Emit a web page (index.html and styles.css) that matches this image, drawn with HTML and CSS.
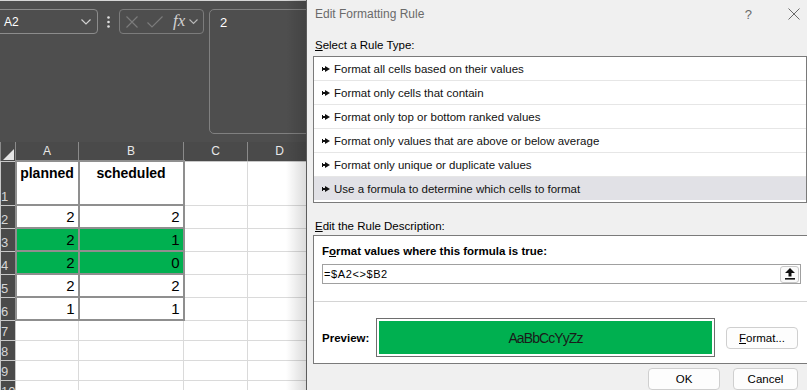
FILE: index.html
```html
<!DOCTYPE html>
<html lang="en">
<head>
  <meta charset="UTF-8" />
  <title>Edit Formatting Rule</title>
  <link rel="stylesheet" href="styles.css">
</head>
<body>

  <div class="app">

    <div class="excel">
      <div class="formula-area">
        <div class="namebox">
          <span>A2</span>
          <svg width="10" height="6" viewBox="0 0 10 6"><path d="M0.5 0.5 L5 5 L9.5 0.5" fill="none" stroke="#d0d0d0" stroke-width="1.2"/></svg>
        </div>
        <div class="dots">
          <svg width="3" height="12" viewBox="0 0 3 12"><circle cx="1.5" cy="1.5" r="1.3" fill="#e0e0e0"/><circle cx="1.5" cy="6" r="1.3" fill="#e0e0e0"/><circle cx="1.5" cy="10.5" r="1.3" fill="#e0e0e0"/></svg>
        </div>
        <div class="fxbox">
          <svg class="ico-x" width="12" height="12" viewBox="0 0 12 12"><path d="M0.5 0.5 L11.5 11.5 M11.5 0.5 L0.5 11.5" stroke="#7c7c7c" stroke-width="1.1"/></svg>
          <svg class="ico-ok" width="16" height="12" viewBox="0 0 16 12"><path d="M0.5 6.5 L5 11 L15.5 0.5" fill="none" stroke="#7c7c7c" stroke-width="1.1"/></svg>
          <span class="fx">fx</span>
          <svg width="9" height="6" viewBox="0 0 9 6"><path d="M0.5 0.5 L4.5 4.5 L8.5 0.5" fill="none" stroke="#b8b8b8" stroke-width="1.1"/></svg>
        </div>
        <div class="formula-bar">2</div>
      </div>

      <table class="sheet">
        <colgroup>
          <col class="c-rh"><col class="c-a"><col class="c-b"><col class="c-c"><col class="c-d">
        </colgroup>
        <tr class="hdr">
          <th class="corner"><svg width="11" height="11" viewBox="0 0 11 11"><polygon points="11,0 11,11 0,11" fill="#e6e6e6"/></svg></th>
          <th>A</th><th>B</th><th>C</th><th>D</th>
        </tr>
        <tr class="r1">
          <td class="rh">1</td>
          <td class="b head">planned</td>
          <td class="b head">scheduled</td>
          <td></td><td></td>
        </tr>
        <tr class="rd">
          <td class="rh">2</td><td class="b num">2</td><td class="b num">2</td><td></td><td></td>
        </tr>
        <tr class="rd">
          <td class="rh">3</td><td class="b num g">2</td><td class="b num g">1</td><td></td><td></td>
        </tr>
        <tr class="rd">
          <td class="rh">4</td><td class="b num g">2</td><td class="b num g">0</td><td></td><td></td>
        </tr>
        <tr class="rd">
          <td class="rh">5</td><td class="b num">2</td><td class="b num">2</td><td></td><td></td>
        </tr>
        <tr class="rd">
          <td class="rh">6</td><td class="b num">1</td><td class="b num">1</td><td></td><td></td>
        </tr>
        <tr class="re"><td class="rh">7</td><td></td><td></td><td></td><td></td></tr>
        <tr class="re"><td class="rh">8</td><td></td><td></td><td></td><td></td></tr>
        <tr class="re"><td class="rh">9</td><td></td><td></td><td></td><td></td></tr>
        <tr class="re"><td class="rh">10</td><td></td><td></td><td></td><td></td></tr>
      </table>

      <div class="shade"></div>
    </div>

    <div class="dialog">
      <div class="titlebar">
        <span class="title">Edit Formatting Rule</span>
        <span class="help">?</span>
        <svg class="close" width="12" height="12" viewBox="0 0 12 12"><path d="M0.5 0.5 L11.5 11.5 M11.5 0.5 L0.5 11.5" stroke="#6a6a6a" stroke-width="1"/></svg>
      </div>

      <div class="label"><u>S</u>elect a Rule Type:</div>
      <ul class="rule-list">
        <li><svg class="arrow" width="8" height="6" viewBox="0 0 8 6"><rect x="0" y="1" width="1" height="4" fill="#111"/><rect x="0" y="2" width="4" height="2" fill="#111"/><polygon points="3,0 8,3 3,6" fill="#111"/></svg>Format all cells based on their values</li>
        <li><svg class="arrow" width="8" height="6" viewBox="0 0 8 6"><rect x="0" y="1" width="1" height="4" fill="#111"/><rect x="0" y="2" width="4" height="2" fill="#111"/><polygon points="3,0 8,3 3,6" fill="#111"/></svg>Format only cells that contain</li>
        <li><svg class="arrow" width="8" height="6" viewBox="0 0 8 6"><rect x="0" y="1" width="1" height="4" fill="#111"/><rect x="0" y="2" width="4" height="2" fill="#111"/><polygon points="3,0 8,3 3,6" fill="#111"/></svg>Format only top or bottom ranked values</li>
        <li><svg class="arrow" width="8" height="6" viewBox="0 0 8 6"><rect x="0" y="1" width="1" height="4" fill="#111"/><rect x="0" y="2" width="4" height="2" fill="#111"/><polygon points="3,0 8,3 3,6" fill="#111"/></svg>Format only values that are above or below average</li>
        <li><svg class="arrow" width="8" height="6" viewBox="0 0 8 6"><rect x="0" y="1" width="1" height="4" fill="#111"/><rect x="0" y="2" width="4" height="2" fill="#111"/><polygon points="3,0 8,3 3,6" fill="#111"/></svg>Format only unique or duplicate values</li>
        <li class="selected"><svg class="arrow" width="8" height="6" viewBox="0 0 8 6"><rect x="0" y="1" width="1" height="4" fill="#111"/><rect x="0" y="2" width="4" height="2" fill="#111"/><polygon points="3,0 8,3 3,6" fill="#111"/></svg>Use a formula to determine which cells to format</li>
      </ul>

      <div class="label label-desc"><u>E</u>dit the Rule Description:</div>
      <div class="desc">
        <div class="desc-title">F<u>o</u>rmat values where this formula is true:</div>
        <div class="formula-input">
          <span class="formula-text">=$A2&lt;&gt;$B2</span>
          <span class="collapse">
            <svg width="10" height="12" viewBox="0 0 10 12"><polygon points="5,0 10,5 6.5,5 6.5,8.5 3.5,8.5 3.5,5 0,5" fill="#111"/><rect x="0" y="10" width="10" height="1.6" fill="#111"/></svg>
          </span>
        </div>
        <div class="divider"></div>
        <div class="preview-row">
          <span class="preview-label">Preview:</span>
          <div class="preview">
            <div class="preview-fill">AaBbCcYyZz</div>
          </div>
          <button class="btn btn-format"><u>F</u>ormat...</button>
        </div>
      </div>

      <div class="actions">
        <button class="btn btn-ok">OK</button>
        <button class="btn btn-cancel">Cancel</button>
      </div>
    </div>

  </div>

</body>
</html>
```

FILE: styles.css
```css
* {
  box-sizing: border-box;
}

html, body {
  margin: 0;
  padding: 0;
}

body {
  width: 807px;
  height: 390px;
  overflow: hidden;
  font-family: "Liberation Sans", Arial, sans-serif;
  background-color: #4e4e4e;
}

.app {
  display: flex;
  height: 390px;
}

/* ---------- spreadsheet side ---------- */

.excel {
  position: relative;
  width: 306px;
  flex: none;
  overflow: hidden;
  background-color: #ffffff;
}

.formula-area {
  height: 142px;
  background-color: #4e4e4e;
  border-top: 1px solid #d6d6d6;
  padding-top: 8px;
  display: flex;
  align-items: flex-start;
}

.namebox {
  flex: none;
  width: 102px;
  height: 25px;
  margin-left: -4px;
  padding: 0 6px 0 7px;
  border: 1px solid #8c8c8c;
  border-radius: 4px;
  display: flex;
  align-items: center;
  justify-content: space-between;
  color: #ffffff;
  font-size: 12px;
}

.dots {
  flex: none;
  width: 21px;
  height: 25px;
  display: flex;
  align-items: center;
  justify-content: center;
}

.fxbox {
  flex: none;
  width: 85px;
  height: 25px;
  border: 1px solid #7c7c7c;
  border-radius: 4px;
  display: flex;
  align-items: center;
  padding-left: 6px;
}

.ico-x {
  margin-right: 9px;
}

.ico-ok {
  margin-right: 10px;
}

.fx {
  font-family: "Liberation Serif", "Times New Roman", serif;
  font-style: italic;
  font-size: 17px;
  color: #d2d2d2;
  margin-right: 4px;
  margin-top: -2px;
}

.formula-bar {
  flex: none;
  width: 120px;
  height: 125px;
  margin-left: 5px;
  padding: 5px 10px;
  border: 1px solid #808080;
  border-radius: 5px;
  color: #ffffff;
  font-size: 13px;
}

.sheet {
  border-collapse: collapse;
  table-layout: fixed;
  width: 311px;
}

.c-rh { width: 15px; }
.c-a { width: 63px; }
.c-b { width: 105px; }
.c-c { width: 64px; }
.c-d { width: 64px; }

.sheet th {
  height: 19px;
  padding: 0;
  background-color: #4a4a4a;
  color: #e8e8e8;
  font-size: 12px;
  font-weight: normal;
  border-left: 1px solid #8a8a8a;
  border-right: 1px solid #8a8a8a;
  border-bottom: 1px solid #c8c8c8;
}

.sheet th.corner {
  text-align: right;
  vertical-align: bottom;
  padding: 0 1px 1px 0;
  line-height: 0;
}

.sheet td {
  padding: 0 3px;
  border: 1px solid #dadada;
  font-size: 15px;
  color: #000000;
}

.sheet td.rh {
  background-color: #4a4a4a;
  color: #d6d6d6;
  font-size: 13px;
  text-align: right;
  vertical-align: bottom;
  padding: 0 11px 1px 0;
  overflow: hidden;
  white-space: nowrap;
  border-color: #c8c8c8;
}

.r1 td { height: 44px; }
.rd td { height: 23px; }
.re td { height: 20px; }

.sheet td.b {
  border: 2px solid #8f8f8f;
}

.sheet td.head {
  font-size: 14px;
  font-weight: bold;
  text-align: center;
  vertical-align: top;
  padding-top: 3px;
}

.sheet td.num {
  text-align: right;
  vertical-align: bottom;
  padding-right: 3px;
  line-height: 20px;
}

.sheet td.g {
  background-color: #00b050;
}

.shade {
  position: absolute;
  top: 0;
  right: 0;
  bottom: 0;
  width: 20px;
  background: linear-gradient(to right, rgba(0, 0, 0, 0), rgba(0, 0, 0, 0.14));
  pointer-events: none;
}

/* ---------- dialog ---------- */

.dialog {
  flex: 1;
  min-width: 0;
  overflow: hidden;
  background-color: #f0f0f0;
  border-left: 1px solid #5c5c5c;
  padding-left: 6px;
  font-size: 11.5px;
  color: #000000;
}

.titlebar {
  height: 28px;
  padding-left: 2px;
  display: flex;
  align-items: center;
  color: #6a6a6a;
  font-size: 12px;
}

.help {
  margin-left: auto;
  font-size: 13px;
}

.close {
  margin-left: 36px;
  margin-right: 7px;
}

.label {
  margin-top: 10px;
  padding-left: 2px;
  line-height: 14px;
}

.label-desc {
  margin-top: 16px;
}

.rule-list {
  list-style: none;
  margin: 4px 0 0 0;
  padding: 0 0 2px 0;
  background-color: #ffffff;
  border: 1px solid #7a7a7a;
}

.rule-list li {
  height: 24px;
  padding-left: 8px;
  border-bottom: 1px solid #e6e6e6;
  display: flex;
  align-items: center;
  gap: 4px;
  color: #111111;
}

.rule-list li.selected {
  height: 23px;
  border-bottom: none;
  background-color: #e1e1e6;
}

.desc {
  margin: 2px -3px 0 0;
  padding: 8px 8px 6px 8px;
  background-color: #ffffff;
  border: 1px solid #7a7a7a;
}

.desc-title {
  font-weight: bold;
  line-height: 14px;
}

.formula-input {
  margin-top: 6px;
  height: 20px;
  border: 1px solid #a0a0a0;
  padding-left: 1px;
  display: flex;
  align-items: center;
  justify-content: space-between;
}

.formula-text {
  font-size: 11px;
  letter-spacing: 0.6px;
}

.collapse {
  width: 19px;
  height: 17px;
  margin-right: 1px;
  border: 1px solid #c8c8c8;
  border-radius: 3px;
  background-color: #fafafa;
  display: flex;
  align-items: center;
  justify-content: center;
}

.divider {
  margin: 17px -8px 0 -8px;
  height: 1px;
  background-color: #d4d4d4;
}

.preview-row {
  margin-top: 16px;
  display: flex;
  align-items: center;
}

.preview-label {
  width: 54px;
  font-weight: bold;
}

.preview {
  width: 339px;
  height: 39px;
  padding: 2px;
  border: 1px solid #6e6e6e;
  background-color: #ffffff;
}

.preview-fill {
  height: 100%;
  background-color: #00b050;
  display: flex;
  align-items: center;
  justify-content: center;
  font-size: 14px;
  letter-spacing: -0.9px;
  color: #1a1a1a;
}

.btn {
  height: 22px;
  padding: 0;
  border: 1px solid #cfcfcf;
  border-radius: 4px;
  background-color: #fdfdfd;
  font-family: inherit;
  font-size: 11.5px;
  color: #000000;
}

.btn-format {
  width: 72px;
  margin-left: 11px;
}

.actions {
  margin-top: 4px;
  padding-right: 9px;
  display: flex;
  justify-content: flex-end;
  gap: 13px;
}

.btn-ok {
  width: 72px;
}

.btn-cancel {
  width: 65px;
}
```
